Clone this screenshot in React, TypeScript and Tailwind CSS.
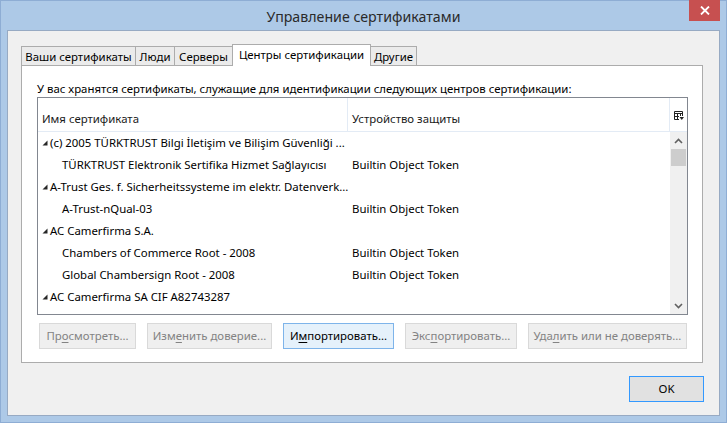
import React from 'react';

const font = { fontFamily: '"Noto Sans", "Open Sans", sans-serif' };

type Row = { name: string; token?: string; group?: boolean };

const rows: Row[] = [
    { name: '(c) 2005 TÜRKTRUST Bilgi İletişim ve Bilişim Güvenliği ...', group: true },
    { name: 'TÜRKTRUST Elektronik Sertifika Hizmet Sağlayıcısı', token: 'Builtin Object Token' },
    { name: 'A-Trust Ges. f. Sicherheitssysteme im elektr. Datenverk...', group: true },
    { name: 'A-Trust-nQual-03', token: 'Builtin Object Token' },
    { name: 'AC Camerfirma S.A.', group: true },
    { name: 'Chambers of Commerce Root - 2008', token: 'Builtin Object Token' },
    { name: 'Global Chambersign Root - 2008', token: 'Builtin Object Token' },
    { name: 'AC Camerfirma SA CIF A82743287', group: true },
];

function Tab({ label, active, width }: { label: string; active?: boolean; width: string }) {
    if (active) {
        return (
            <div className={`${width} h-[22px] -mb-px -ml-px relative z-10 bg-white border border-b-0 border-[#acacac] flex items-center justify-center pb-[2px] text-black`}>
                {label}
            </div>
        );
    }
    return (
        <div className={`${width} h-[19px] -ml-px first:ml-0 bg-[#ebebeb] border border-b-0 border-[#acacac] flex items-center justify-center pt-px text-black`}>
            {label}
        </div>
    );
}

function Triangle() {
    return (
        <svg width="6" height="6" viewBox="0 0 6 6" className="mr-[2px] shrink-0">
            <polygon points="5.5,0.5 5.5,5.5 0.5,5.5" fill="#262626" />
        </svg>
    );
}

function Button({ children, width, disabled, focused }: { children: React.ReactNode; width: string; disabled?: boolean; focused?: boolean }) {
    const cls = disabled
        ? 'bg-[#efefef] border-[#d9d9d9] text-[#838383]'
        : focused
            ? 'bg-[#e5f1fb] border-[#7eb4ea] text-black'
            : 'bg-[#e1e1e1] border-[#adadad] text-black';
    return (
        <div className={`${width} h-[26px] border ${cls} flex items-center justify-center`}>
            {children}
        </div>
    );
}

export default function App() {
    return (
        <div className="w-[727px] h-[423px] bg-[#adc9e7] border border-[#8eadd4] flex flex-col text-[11.4px] leading-4" style={font}>
            <div className="h-[29px] relative flex items-center justify-center">
                <span className="text-[14.2px] text-[#2a2a2a] pt-[2px]">Управление сертификатами</span>
                <div className="absolute right-[6px] -top-px w-[31px] h-[21px] bg-[#c75050] flex items-center justify-center">
                    <svg width="10" height="9" viewBox="0 0 10 9">
                        <path d="M1 0.5 L9 8.5 M9 0.5 L1 8.5" stroke="#fff" strokeWidth="1.8" />
                    </svg>
                </div>
            </div>

            <div className="mx-[6px] h-[386px] border border-[#97aac3] bg-[#f0f0f0] flex flex-col pl-[13px] pt-[13px]">
                <div className="flex items-end h-[21px]">
                    <Tab label="Ваши сертификаты" width="w-[115px]" />
                    <Tab label="Люди" width="w-[40px]" />
                    <Tab label="Серверы" width="w-[59px]" />
                    <Tab label="Центры сертификации" width="w-[139px]" active />
                    <Tab label="Другие" width="w-[47px]" />
                </div>

                <div className="w-[682px] h-[298px] bg-white border border-[#acacac] flex flex-col pl-[15px] pt-[15px]">
                    <p className="h-4 text-black whitespace-nowrap">
                        У вас хранятся сертификаты, служащие для идентификации следующих центров сертификации:
                    </p>

                    <div className="w-[651px] h-[218px] border border-[#828790] flex flex-col">
                        <div className="h-[34px] flex border-b border-[#e3ebf5] shrink-0">
                            <div className="w-[310px] border-r border-[#e3ebf5] flex items-center pl-[4px] pt-[9px] text-[#1a1a1a]">Имя сертификата</div>
                            <div className="flex-1 border-r border-[#e3ebf5] flex items-center pl-[4px] pt-[9px] text-[#1a1a1a]">Устройство защиты</div>
                            <div className="w-[17px] flex items-center justify-center pt-[3px]">
                                <svg width="10" height="10" viewBox="0 0 10 10">
                                    <path d="M0.5 0.5 H8.5 V5 M0.5 0.5 V8.5 H5 M0.5 2.5 H8.5 M3.5 2.5 V8.5 M6.5 2.5 V5 M0.5 5.5 H5" stroke="#222" strokeWidth="1" fill="none" />
                                    <polygon points="5.5,6 10,6 7.75,9" fill="#222" />
                                </svg>
                            </div>
                        </div>

                        <div className="flex flex-1 min-h-0">
                            <div className="flex-1 flex flex-col">
                                {rows.map((row, i) => (
                                    <div key={i} className="h-[22px] flex items-center text-black">
                                        {row.group ? (
                                            <div className="flex items-center pl-[4px] whitespace-nowrap overflow-hidden w-[310px]">
                                                <Triangle />
                                                <span>{row.name}</span>
                                            </div>
                                        ) : (
                                            <>
                                                <div className="w-[310px] pl-[24px] whitespace-nowrap overflow-hidden">{row.name}</div>
                                                <div className="pl-[4px] whitespace-nowrap">{row.token}</div>
                                            </>
                                        )}
                                    </div>
                                ))}
                            </div>

                            <div className="w-[17px] bg-[#f0f0f0] flex flex-col items-center">
                                <div className="h-[17px] w-full flex items-center justify-center">
                                    <svg width="9" height="6" viewBox="0 0 9 6">
                                        <path d="M1 5 L4.5 1.5 L8 5" stroke="#606060" strokeWidth="1.6" fill="none" />
                                    </svg>
                                </div>
                                <div className="h-[17px] w-[15px] bg-[#cdcdcd]" />
                                <div className="flex-1" />
                                <div className="h-[17px] w-full flex items-center justify-center">
                                    <svg width="9" height="6" viewBox="0 0 9 6">
                                        <path d="M1 1 L4.5 4.5 L8 1" stroke="#606060" strokeWidth="1.6" fill="none" />
                                    </svg>
                                </div>
                            </div>
                        </div>
                    </div>

                    <div className="flex gap-[11px] mt-[8px] pl-[2px]">
                        <Button width="w-[97px]" disabled>Пр<u className="underline-offset-2">о</u>смотреть...</Button>
                        <Button width="w-[125px]" disabled>Изм<u className="underline-offset-2">е</u>нить доверие...</Button>
                        <Button width="w-[111px]" focused>И<u className="underline-offset-2">м</u>портировать...</Button>
                        <Button width="w-[112px]" disabled>Экс<u className="underline-offset-2">п</u>ортировать...</Button>
                        <Button width="w-[159px]" disabled>Уда<u className="underline-offset-2">л</u>ить или не доверять...</Button>
                    </div>
                </div>

                <div className="flex justify-end pr-[15px] mt-[13px]">
                    <div className="w-[75px] h-[26px] bg-[#e1e1e1] border border-[#3399ff] flex items-center justify-center text-black">OK</div>
                </div>
            </div>
        </div>
    );
}
